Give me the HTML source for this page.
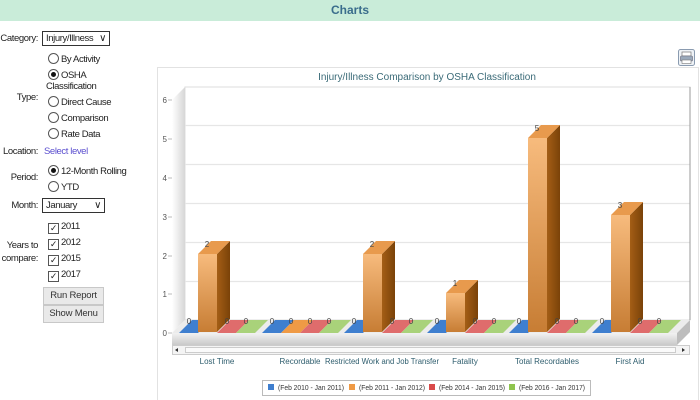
<!DOCTYPE html>
<html><head><meta charset="utf-8"><style>
body{margin:0;width:700px;height:400px;overflow:hidden;background:#fff;font-family:"Liberation Sans",Arial,sans-serif;font-size:9.5px;letter-spacing:-0.4px;color:#222;position:relative}
.hdr{position:absolute;left:0;top:0;width:700px;height:21px;background:#c9ecd9;text-align:center;line-height:21px;font-weight:bold;font-size:12px;letter-spacing:0;color:#3a6d8c}
.a{position:absolute;white-space:nowrap}
.l{position:absolute;white-space:nowrap;right:662px;text-align:right}
.sel{position:absolute;border:1px solid #333;background:#fff;line-height:13px;padding-left:3px;box-sizing:border-box;height:15px}
.r{display:inline-block;width:9px;height:9px;border:1px solid #555;border-radius:50%;vertical-align:-2px;margin-right:2px;position:relative;background:#fff}
.r.on::after{content:"";position:absolute;left:2px;top:2px;width:5px;height:5px;border-radius:50%;background:#111}
.c{display:inline-block;width:9px;height:9px;border:1px solid #555;vertical-align:-2px;margin-right:2px;font-size:9px;line-height:9px;text-align:center;background:#fff}
.btn{position:absolute;left:43px;width:59px;height:16px;border:1px solid #c8c8c8;background:#e9e9e9;text-align:center;line-height:16px;font-size:9.5px;color:#333;letter-spacing:-0.2px}
</style></head><body>
<div class="hdr">Charts</div>
<div class="l" style="top:33px">Category:</div>
<div class="sel" style="left:42px;top:31px;width:68px">Injury/Illness <span style="position:absolute;right:3px;top:0;font-size:10px">&#8744;</span></div>
<div class="a" style="left:48px;top:53px"><span class="r"></span>By Activity</div>
<div class="a" style="left:48px;top:69px"><span class="r on"></span>OSHA</div>
<div class="a" style="left:46px;top:81px">Classification</div>
<div class="l" style="top:92px">Type:</div>
<div class="a" style="left:48px;top:96px"><span class="r"></span>Direct Cause</div>
<div class="a" style="left:48px;top:112px"><span class="r"></span>Comparison</div>
<div class="a" style="left:48px;top:128px"><span class="r"></span>Rate Data</div>
<div class="l" style="top:146px">Location:</div>
<div class="a" style="left:44px;top:146px;color:#5b4fcf">Select level</div>
<div class="a" style="left:48px;top:165px"><span class="r on"></span>12-Month Rolling</div>
<div class="l" style="top:172px">Period:</div>
<div class="a" style="left:48px;top:181px"><span class="r"></span>YTD</div>
<div class="l" style="top:200px">Month:</div>
<div class="sel" style="left:42px;top:198px;width:63px">January <span style="position:absolute;right:3px;top:0;font-size:10px">&#8744;</span></div>
<div class="a" style="left:48px;top:221px"><span class="c">&#10003;</span>2011</div>
<div class="a" style="left:48px;top:237px"><span class="c">&#10003;</span>2012</div>
<div class="a" style="left:48px;top:253px"><span class="c">&#10003;</span>2015</div>
<div class="a" style="left:48px;top:269px"><span class="c">&#10003;</span>2017</div>
<div class="l" style="top:239px;line-height:13px">Years to<br>compare:</div>
<div class="btn" style="top:287px">Run Report</div>
<div class="btn" style="top:305px">Show Menu</div>

<svg style="position:absolute;left:0;top:0;letter-spacing:0" width="700" height="400" font-family="Liberation Sans,Arial,sans-serif">
<defs>
<linearGradient id="of" x1="0" x2="0" y1="0" y2="1"><stop offset="0" stop-color="#f7bb7d"/><stop offset="1" stop-color="#c77d34"/></linearGradient>
<linearGradient id="os" x1="0" x2="1" y1="0" y2="0"><stop offset="0" stop-color="#a45e16"/><stop offset="1" stop-color="#7a4208"/></linearGradient>
<linearGradient id="wl" x1="0" x2="1"><stop offset="0" stop-color="#fff"/><stop offset="1" stop-color="#d6d6d6"/></linearGradient>
<linearGradient id="ff" x1="0" x2="0" y1="0" y2="1"><stop offset="0" stop-color="#f2f2f2"/><stop offset="1" stop-color="#c9c9c9"/></linearGradient>
</defs>
<rect x="157.5" y="67.5" width="541" height="340" fill="#fff" stroke="#e2e2e2"/>
<text x="427" y="80" text-anchor="middle" font-size="10" fill="#3b6b78">Injury/Illness Comparison by OSHA Classification</text>
<rect x="185" y="87" width="505" height="233" fill="#fff" stroke="#ddd"/>
<g stroke="#e6e6e6" stroke-width="1.2">
<line x1="185" y1="125.5" x2="690" y2="125.5"/><line x1="185" y1="164.5" x2="690" y2="164.5"/><line x1="185" y1="203.5" x2="690" y2="203.5"/><line x1="185" y1="242.5" x2="690" y2="242.5"/><line x1="185" y1="281.5" x2="690" y2="281.5"/>
</g>
<line x1="690" y1="87" x2="690" y2="320" stroke="#999"/>
<polygon points="172,100 185,87 185,320 172,333" fill="url(#wl)"/>
<g font-size="8" fill="#555" text-anchor="end">
<text x="167" y="103">6</text><text x="167" y="142">5</text><text x="167" y="181">4</text><text x="167" y="220">3</text><text x="167" y="259">2</text><text x="167" y="297">1</text><text x="167" y="336">0</text>
</g>
<g stroke="#bbb"><line x1="168" y1="100" x2="172" y2="100"/><line x1="168" y1="139" x2="172" y2="139"/><line x1="168" y1="178" x2="172" y2="178"/><line x1="168" y1="217" x2="172" y2="217"/><line x1="168" y1="256" x2="172" y2="256"/><line x1="168" y1="294" x2="172" y2="294"/><line x1="168" y1="333" x2="172" y2="333"/></g>
<polygon points="172,333 185,320 690,320 677,333" fill="#ececec"/>
<rect x="172" y="333" width="505" height="12" fill="url(#ff)"/>
<polygon points="677,333 690,320 690,332 677,345" fill="#bdbdbd"/>
<g>
<path d="M179,333h19l13,-13h-19z M262,333h19l13,-13h-19z M344,333h19l13,-13h-19z M427,333h19l13,-13h-19z M509,333h19l13,-13h-19z M592,333h19l13,-13h-19z" fill="#3f7fcf"/>
<path d="M281,333h19l13,-13h-19z" fill="#ef9a45"/>
<path d="M217,333h19l13,-13h-19z M300,333h19l13,-13h-19z M382,333h19l13,-13h-19z M465,333h19l13,-13h-19z M547,333h19l13,-13h-19z M630,333h19l13,-13h-19z" fill="#df6c6c"/>
<path d="M236,333h19l13,-13h-19z M319,333h19l13,-13h-19z M401,333h19l13,-13h-19z M484,333h19l13,-13h-19z M566,333h19l13,-13h-19z M649,333h19l13,-13h-19z" fill="#a9d27a"/>
</g>
<g>
<rect x="198" y="254" width="19" height="78" fill="url(#of)"/><polygon points="217,254 230,241 230,319 217,332" fill="url(#os)"/><polygon points="198,254 217,254 230,241 211,241" fill="#e89a4d"/>
<rect x="363" y="254" width="19" height="78" fill="url(#of)"/><polygon points="382,254 395,241 395,319 382,332" fill="url(#os)"/><polygon points="363,254 382,254 395,241 376,241" fill="#e89a4d"/>
<rect x="446" y="293" width="19" height="39" fill="url(#of)"/><polygon points="465,293 478,280 478,319 465,332" fill="url(#os)"/><polygon points="446,293 465,293 478,280 459,280" fill="#e89a4d"/>
<rect x="528" y="138" width="19" height="194" fill="url(#of)"/><polygon points="547,138 560,125 560,319 547,332" fill="url(#os)"/><polygon points="528,138 547,138 560,125 541,125" fill="#e89a4d"/>
<rect x="611" y="215" width="19" height="117" fill="url(#of)"/><polygon points="630,215 643,202 643,319 630,332" fill="url(#os)"/><polygon points="611,215 630,215 643,202 624,202" fill="#e89a4d"/>
</g>
<g font-size="8" fill="#444" text-anchor="middle">
<text x="189" y="324">0</text><text x="227" y="324">0</text><text x="246" y="324">0</text>
<text x="272" y="324">0</text><text x="291" y="324">0</text><text x="310" y="324">0</text><text x="329" y="324">0</text>
<text x="354" y="324">0</text><text x="392" y="324">0</text><text x="411" y="324">0</text>
<text x="437" y="324">0</text><text x="475" y="324">0</text><text x="494" y="324">0</text>
<text x="519" y="324">0</text><text x="557" y="324">0</text><text x="576" y="324">0</text>
<text x="602" y="324">0</text><text x="640" y="324">0</text><text x="659" y="324">0</text>
<text x="207" y="247">2</text><text x="372" y="247">2</text><text x="455" y="286">1</text><text x="537" y="131">5</text><text x="620" y="208">3</text>
</g>
<rect x="172.5" y="345.5" width="517" height="9" fill="#f4f4f4" stroke="#ccc"/>
<rect x="185.5" y="347.5" width="490" height="5" fill="#fafafa" stroke="#ccc"/>
<path d="M178,348l-3,2l3,2z" fill="#333"/><path d="M682,348l3,2l-3,2z" fill="#333"/>
<g font-size="8" fill="#2f5e6e" text-anchor="middle">
<text x="217" y="364">Lost Time</text><text x="300" y="364">Recordable</text><text x="382" y="364" textLength="114" lengthAdjust="spacingAndGlyphs">Restricted Work and Job Transfer</text><text x="465" y="364">Fatality</text><text x="547" y="364">Total Recordables</text><text x="630" y="364">First Aid</text>
</g>
<rect x="262.5" y="380.5" width="328" height="15" fill="#fff" stroke="#bbb"/>
<g font-size="7" fill="#333">
<rect x="268" y="384" width="6" height="6" fill="#3f7fcf"/><text x="278" y="390" textLength="66" lengthAdjust="spacingAndGlyphs">(Feb 2010 - Jan 2011)</text>
<rect x="349" y="384" width="6" height="6" fill="#ef9a45"/><text x="359" y="390" textLength="66" lengthAdjust="spacingAndGlyphs">(Feb 2011 - Jan 2012)</text>
<rect x="429" y="384" width="6" height="6" fill="#d94a4a"/><text x="439" y="390" textLength="66" lengthAdjust="spacingAndGlyphs">(Feb 2014 - Jan 2015)</text>
<rect x="509" y="384" width="6" height="6" fill="#8fc44e"/><text x="519" y="390" textLength="66" lengthAdjust="spacingAndGlyphs">(Feb 2016 - Jan 2017)</text>
</g>
<rect x="678.5" y="49.5" width="16" height="16" rx="2" fill="#eef2f6" stroke="#8a9bb0"/>
<rect x="682" y="52" width="9" height="4" fill="#fff" stroke="#777" stroke-width=".7"/>
<rect x="680.5" y="56" width="12" height="5" rx="1" fill="#9aa9bb" stroke="#667" stroke-width=".6"/>
<rect x="682" y="60" width="9" height="3.5" fill="#fff" stroke="#777" stroke-width=".6"/>
</svg>
</body></html>
